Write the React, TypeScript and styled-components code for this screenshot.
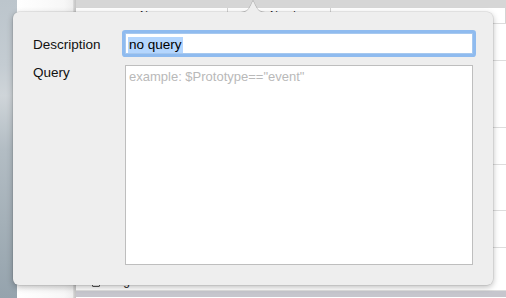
import styled, { createGlobalStyle } from 'styled-components';

const GlobalStyle = createGlobalStyle`
	html, body {
		margin: 0;
		padding: 0;
		width: 506px;
		height: 298px;
		overflow: hidden;
		font-family: 'Liberation Sans', Arial, sans-serif;
	}
	* {
		box-sizing: border-box;
	}
`;

const Screen = styled.div`
	position: relative;
	display: flex;
	width: 506px;
	height: 298px;
	overflow: hidden;
	background: #ffffff;
`;

const Wallpaper = styled.div`
	width: 17px;
	flex-shrink: 0;
	background: linear-gradient(
		180deg,
		#bcc5cc 0%,
		#c4ccd2 22%,
		#cfd5d9 32%,
		#b3bdc4 50%,
		#a4b0b8 75%,
		#95a3ad 100%
	);
`;

const Sidebar = styled.div`
	width: 59px;
	flex-shrink: 0;
	background: linear-gradient(90deg, #ffffff 0%, #f7f7f7 80%, #eeeeee 95%, #d2d2d2 96%, #c4c4c4 100%);
`;

const MainPane = styled.div`
	flex: 1;
	display: flex;
	flex-direction: column;
`;

const TopBar = styled.div`
	height: 8px;
	background: #d6d6d6;
`;

const TableHeader = styled.div`
	height: 16px;
	display: flex;
	border-bottom: 1px solid #dcdcdc;
	background: #ffffff;
`;

const HeaderCell = styled.div<{ $w: number; $pad: number }>`
	width: ${(p) => p.$w}px;
	padding: 1px 0 0 ${(p) => p.$pad}px;
	font-size: 11px;
	color: #222;
	border-right: 1px solid #d4d4d4;
	white-space: nowrap;
	overflow: hidden;
`;

const Row = styled.div<{ $h: number }>`
	height: ${(p) => p.$h}px;
	border-bottom: 1px solid #dddddd;
	display: flex;
	align-items: flex-end;
	padding: 0 0 2px 16px;
	gap: 10px;
	font-size: 12px;
	color: #222;
`;

const LogIcon = styled.span`
	width: 8px;
	height: 8px;
	border: 1px solid #555;
	border-radius: 1px;
	margin-bottom: 1px;
`;

const StatusBand = styled.div`
	height: 6px;
	background: #c6c6cd;
`;

const Popover = styled.div`
	position: absolute;
	left: 13px;
	top: 12px;
	width: 480px;
	height: 273px;
	padding: 21px 20px 20px 20px;
	background: #eeeeee;
	border-radius: 6px;
	box-shadow: 0 0 0 0.5px rgba(0, 0, 0, 0.12), 0 2px 6px rgba(0, 0, 0, 0.28);
	display: grid;
	grid-template-columns: 92px 348px;
	grid-template-rows: 21px 200px;
	row-gap: 11px;
`;

const Arrow = styled.svg`
	position: absolute;
	left: 225px;
	top: -12px;
	width: 30px;
	height: 13px;
	overflow: visible;
	filter: drop-shadow(0 -0.5px 0.6px rgba(0, 0, 0, 0.22));
`;

const Label = styled.div<{ $top?: boolean }>`
	font-size: 13.5px;
	color: #111;
	display: flex;
	align-items: ${(p) => (p.$top ? 'flex-start' : 'center')};
	padding-top: ${(p) => (p.$top ? 0 : 1)}px;
`;

const TextField = styled.div`
	height: 21px;
	background: #ffffff;
	border: 1px solid #a6c8ef;
	border-radius: 1px;
	box-shadow: 0 0 0 3px #8fbbef;
	padding: 2px 2px 0 2px;
	font-size: 13.5px;
	color: #000;
	display: flex;
	align-items: center;
`;

const Selection = styled.span`
	background: #b4d6fe;
	height: 16px;
	line-height: 16px;
	padding: 0 1px;
`;

const QueryArea = styled.textarea`
	width: 348px;
	height: 200px;
	resize: none;
	border: 1px solid #bebebe;
	background: #ffffff;
	padding: 3px 3px;
	margin: 0;
	font-family: 'Liberation Sans', Arial, sans-serif;
	font-size: 13px;
	color: #000;
	outline: none;

	&::placeholder {
		color: #b9b9b9;
	}
`;

const rows = [37, 67, 37, 46, 37];

function App() {
	return (
		<>
			<GlobalStyle />
			<Screen>
				<Wallpaper />
				<Sidebar />
				<MainPane>
					<TopBar />
					<TableHeader>
						<HeaderCell $w={152} $pad={64}>Name</HeaderCell>
						<HeaderCell $w={103} $pad={42}>Number</HeaderCell>
						<HeaderCell $w={175} $pad={0} />
					</TableHeader>
					{rows.map((h, i) => (
						<Row key={i} $h={h} />
					))}
					<Row $h={43}>
						<LogIcon />
						Log
					</Row>
					<StatusBand />
				</MainPane>
				<Popover>
					<Arrow viewBox="0 0 30 13">
						<path
							d="M0 13 C8 13 10 11 13 5 C14 2.5 15 1 15 1 C15 1 16 2.5 17 5 C20 11 22 13 30 13 Z"
							fill="#eeeeee"
						/>
					</Arrow>
					<Label>Description</Label>
					<TextField>
						<Selection>no query</Selection>
					</TextField>
					<Label $top>Query</Label>
					<QueryArea placeholder='example: $Prototype=="event"' />
				</Popover>
			</Screen>
		</>
	);
}

export default App;
